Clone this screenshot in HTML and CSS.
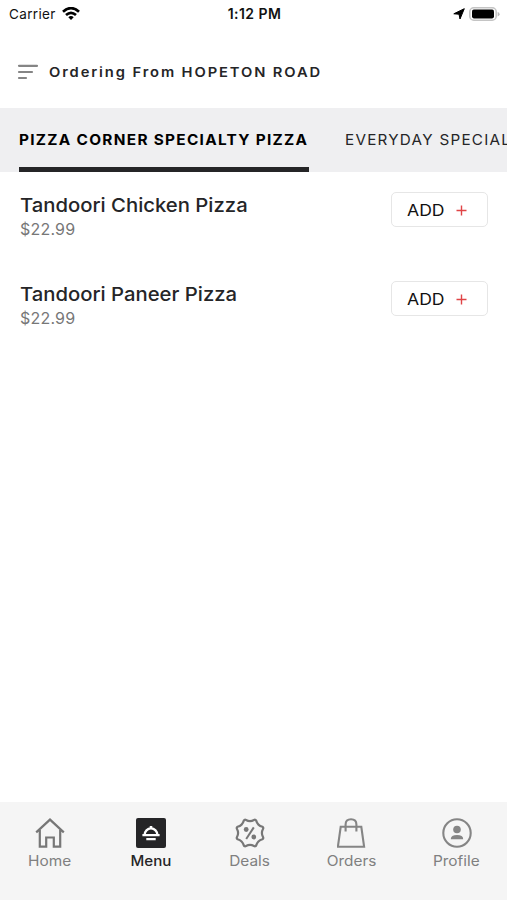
FILE: index.html
```html
<!DOCTYPE html>
<html lang="en">
<head>
<meta charset="utf-8">
<title>Menu</title>
<link rel="stylesheet" href="styles.css">
</head>
<body>
<div class="app">
  <div class="status">
    <div class="status-left"><span class="carrier">Carrier</span>
      <svg width="18" height="14" viewBox="0 0 18 14" fill="none" stroke="#000" stroke-width="2.7"><path d="M1 4.7Q9-2.4 17 4.7M4 8q5-4.4 10 0"/><path d="M9 13 6.3 10.2q2.7-2.2 5.4 0z" fill="#000" stroke="none"/></svg>
    </div>
    <span class="time">1:12 PM</span>
    <div class="status-right">
      <svg width="12" height="12" viewBox="0 0 12 12"><path d="M11.3.7 7 11 6 6.2.8 5.8z" fill="#000" stroke="#000" stroke-linejoin="round"/></svg>
      <svg width="31" height="14" viewBox="0 0 31 14"><rect x=".8" y=".8" width="26.4" height="12.4" rx="4" fill="#fff" stroke="#c4c4c4" stroke-width="1.6"/><rect x="3" y="2.6" width="22" height="8.8" rx="1.8"/><path d="M28.6 5v4.4q2-.6 2-2.2t-2-2.2z" fill="#b9b9b9"/></svg>
    </div>
  </div>
  <header class="header">
    <svg width="21" height="16" viewBox="0 0 21 16" stroke="#858585" stroke-width="2.2" stroke-linecap="round"><path d="M2 1.8H20M2 8H15M2 14H9"/></svg>
    <h1 class="location">Ordering From HOPETON ROAD</h1>
  </header>
  <nav class="tabs">
    <div class="tab active"><span class="tab-text">PIZZA CORNER SPECIALTY PIZZA</span></div>
    <div class="tab"><span class="tab-text">EVERYDAY SPECIAL</span></div>
  </nav>
  <main class="items">
    <div class="item">
      <div><h2 class="name">Tandoori Chicken Pizza</h2><p class="price">$22.99</p></div>
      <button class="add"><span class="add-text">ADD</span><svg width="11" height="11" viewBox="0 0 11 11" stroke="#e04446" stroke-width="1.4"><path d="M.5 5.5h10M5.5.5v10"/></svg></button>
    </div>
    <div class="item">
      <div><h2 class="name">Tandoori Paneer Pizza</h2><p class="price">$22.99</p></div>
      <button class="add"><span class="add-text">ADD</span><svg width="11" height="11" viewBox="0 0 11 11" stroke="#e04446" stroke-width="1.4"><path d="M.5 5.5h10M5.5.5v10"/></svg></button>
    </div>
  </main>
  <nav class="bottom">
    <div class="link">
      <svg width="30" height="30" viewBox="0 0 30 30" fill="none" stroke="#777" stroke-width="2.2"><path d="M1.2 14.4 15 1.6 28.8 14.4M4.8 12v16.7h6.4v-9.2h7.6v9.2h6.4V12"/></svg>
      <span class="label">Home</span>
    </div>
    <div class="link current">
      <svg width="30" height="30" viewBox="0 0 30 30"><rect width="30" height="30" rx="2" fill="#252527"/><g fill="none" stroke="#fff" stroke-width="2.3"><path d="M6.4 17.2h17.2M8.6 17a6.4 6.6 0 0 1 12.8 0M10.3 21.2h9.4"/><path d="M15 8v3" stroke-width="2.6"/></g></svg>
      <span class="label">Menu</span>
    </div>
    <div class="link">
      <svg width="30" height="30" viewBox="-15 -15 30 30" fill="none" stroke="#777" stroke-width="2.2" stroke-linejoin="round"><path d="M-6.2-12.4Q-5.4-13.8-4-13Q0-10.8 4-13Q5.4-13.8 6.2-12.4Q7.6-7.6 12.4-6.2Q13.8-5.4 13-4Q10.8 0 13 4Q13.8 5.4 12.4 6.2Q7.6 7.6 6.2 12.4Q5.4 13.8 4 13Q0 10.8-4 13Q-5.4 13.8-6.2 12.4Q-7.6 7.6-12.4 6.2Q-13.8 5.4-13 4Q-10.8 0-13-4Q-13.8-5.4-12.4-6.2Q-7.6-7.6-6.2-12.4z"/><path d="M3.8-5.6-3.8 6" stroke-width="2"/><circle cx="-3.8" cy="-3.5" r="2.4" fill="#777" stroke="none"/><circle cx="3.8" cy="4" r="2.4" fill="#777" stroke="none"/></svg>
      <span class="label">Deals</span>
    </div>
    <div class="link">
      <svg width="30" height="30" viewBox="0 0 30 30" fill="none" stroke="#858585" stroke-width="2.1"><path d="M3.7 8.8h20.6l2.8 19.9H.9zM8.6 13.6V6.4q0-5.1 5.4-5.1t5.4 5.1v7.2"/></svg>
      <span class="label">Orders</span>
    </div>
    <div class="link">
      <svg width="30" height="30" viewBox="0 0 30 30"><circle cx="15" cy="15" r="13.7" fill="none" stroke="#858585" stroke-width="2.1"/><circle cx="15" cy="11.5" r="3.8" fill="#858585"/><path d="M8.8 21.3q0-4.2 6.2-4.2t6.2 4.2z" fill="#858585"/></svg>
      <span class="label">Profile</span>
    </div>
  </nav>
</div>
</body>
</html>
```
FILE: styles.css
```css
* { box-sizing: border-box; margin: 0; padding: 0; }
body { font-family: Inter, "Liberation Sans", sans-serif; background: #fff; color: #252527; }
.app { width: 507px; height: 900px; display: flex; flex-direction: column; overflow: hidden; }
svg { display: block; flex: none; }
.status { height: 28px; display: grid; grid-template-columns: 1fr auto 1fr; align-items: center; padding: 0 7px 0 9px; line-height: 28px; color: #111; }
.status-left { display: flex; align-items: center; gap: 6px; height: 26px; }
.carrier { font-size: 13.5px; letter-spacing: 0.35px; }
.time { font-size: 14px; font-weight: 600; letter-spacing: 0.45px; }
.status-right { display: flex; justify-content: flex-end; align-items: center; gap: 4px; height: 26px; }
.header { height: 80px; display: flex; align-items: center; gap: 11px; padding: 7px 0 0 17px; }
.location { font-size: 13.5px; font-weight: 600; letter-spacing: 1.73px; white-space: nowrap; transform: scaleX(1.09); transform-origin: left; }
.tabs { height: 64px; background: #efeff1; display: flex; gap: 36px; padding-left: 19px; overflow: hidden; flex: none; }
.tab { height: 64px; flex: none; line-height: 64px; font-size: 14.5px; letter-spacing: 1.2px; white-space: nowrap; }
.tab-text { display: inline-block; transform: scaleX(1.05); transform-origin: left; }
.active { width: 290px; color: #000; font-weight: 700; border-bottom: 5px solid #252527; letter-spacing: 1.22px; }
.active .tab-text { transform: scaleX(1.06); }
.items { flex: 1; padding: 21px 19px 0 20px; }
.item { height: 89px; display: flex; justify-content: space-between; align-items: flex-start; }
.name { font-size: 19px; line-height: 26px; font-weight: 550; white-space: nowrap; transform: scaleX(1.067); transform-origin: left; }
.price { font-size: 16px; line-height: 22px; margin-top: -1px; color: #777; letter-spacing: 0.2px; }
.add { width: 97px; height: 35px; margin-top: -1px; border: 1.5px solid #e6e6e6; border-radius: 5px; background: #fff; display: flex; align-items: center; padding-left: 15px; gap: 15px; font: 16px Inter, "Liberation Sans", sans-serif; color: #111; }
.add-text { transform: scaleX(1.1); transform-origin: left; }
.add svg { margin-top: 2px; }
.bottom { height: 98px; background: #f5f5f5; display: grid; grid-template-columns: 100px 102px 95px 109px 101px; padding-top: 16px; flex: none; }
.link { display: flex; flex-direction: column; align-items: center; color: #808080; }
.label { font-size: 14px; line-height: 20px; margin-top: 3px; transform: scaleX(1.1); }
.current { color: #252527; }
.current .label { font-weight: 500; transform: scaleX(1.08); }
```
